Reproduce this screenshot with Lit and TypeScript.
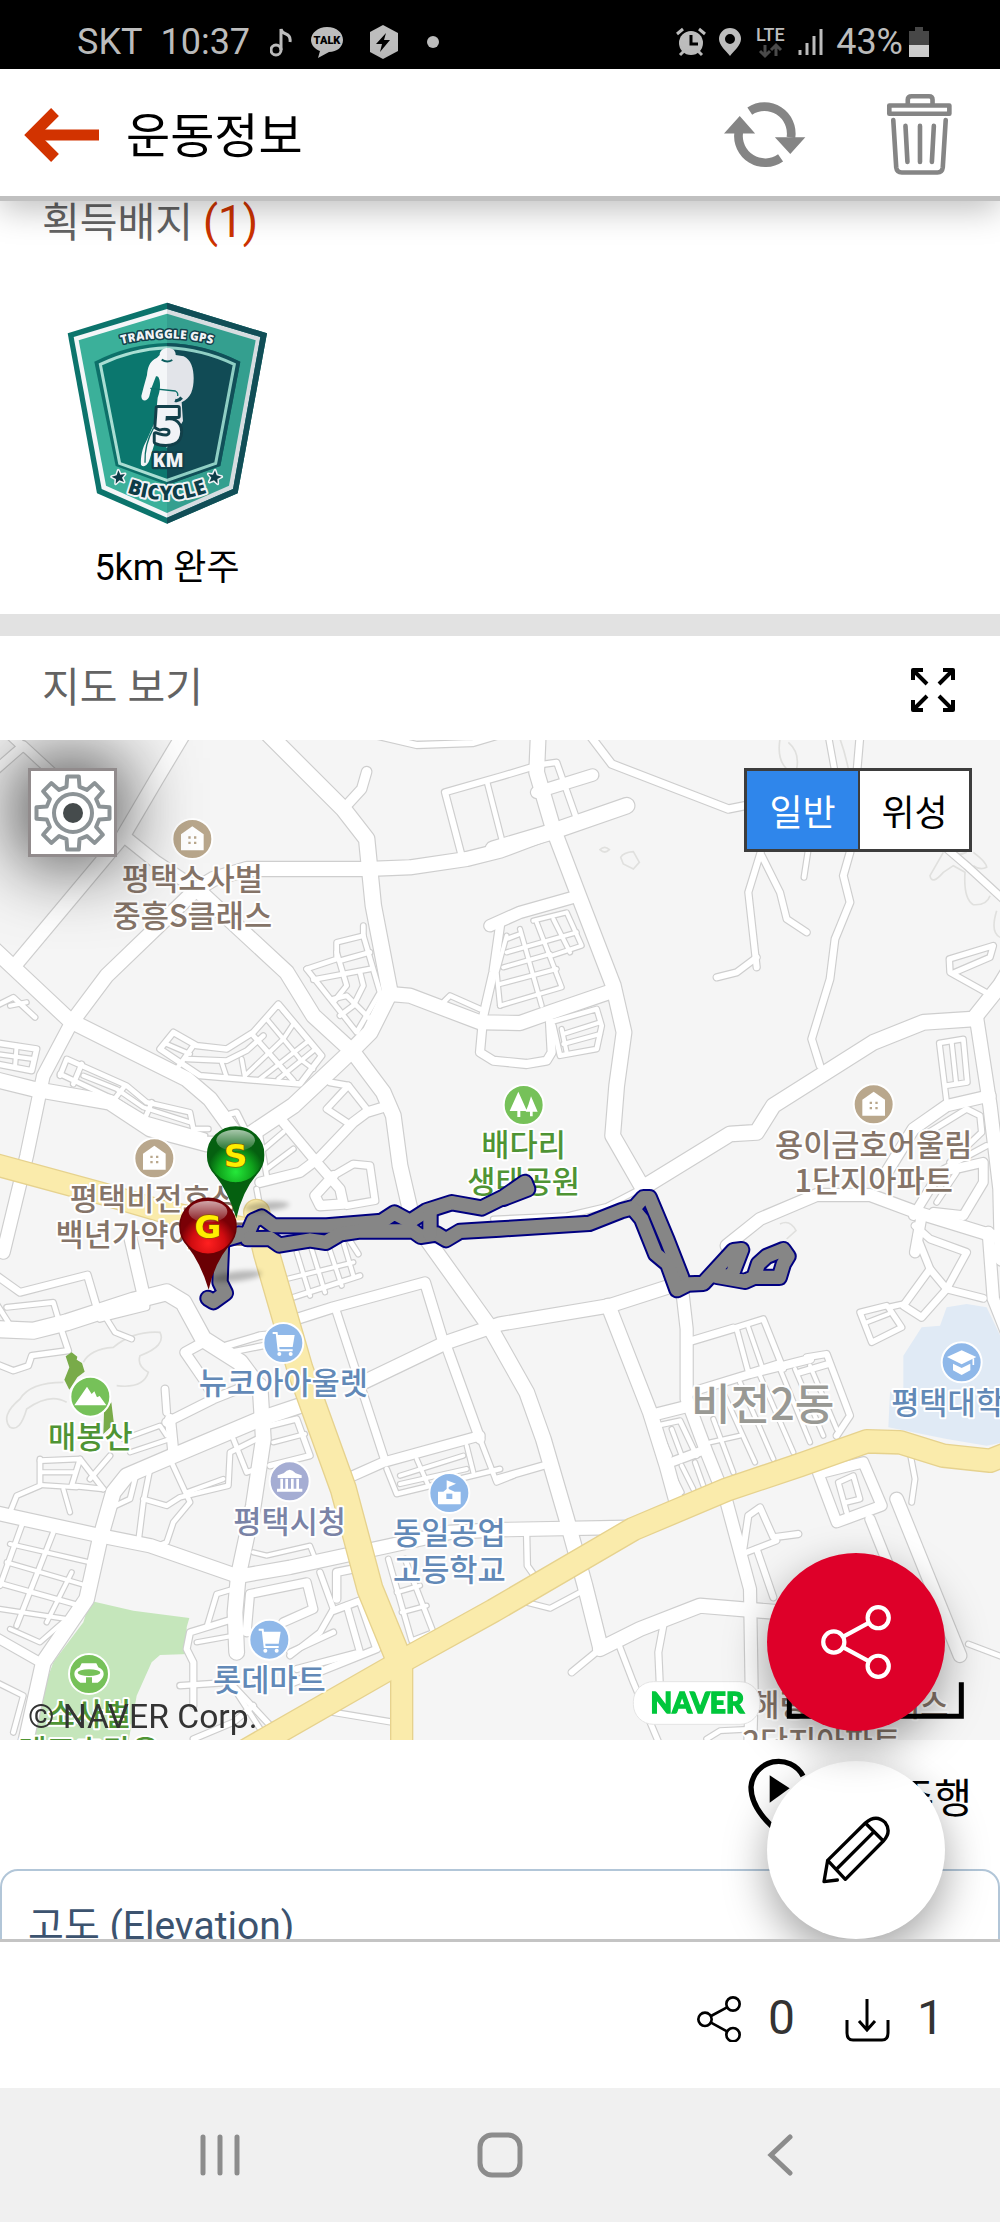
import { LitElement, html, svg, css } from "lit";
import { customElement, state } from "lit/decorators.js";

type Road = [width: number, points: string];
interface Tile {
  dx: number;
  dy: number;
  roads: Road[];
}

// Street network. Each tile covers 1500 x 1500 map units; a road is its width and its points.
const TILES: Tile[] = [
  {
    dx: 0,
    dy: 0,
    roads: [
      [14, "920,690 1010,660 1010,610 1090,590 1090,560"],
      [14, "1090,590 1140,760 1070,880 920,690"],
      [14, "1010,640 1040,740 1000,790"],
      [14, "940,722 1110,690"],
      [14, "1020,665 1110,640"],
      [14, "1080,700 1090,740 1060,800 1020,830"],
      [14, "1000,780 1040,770 1060,790 1110,840"],
      [16, "480,930 520,880 590,920 680,930 760,880 835,795 965,950 900,1035 600,1010 480,930"],
      [14, "530,990 580,920"],
      [14, "560,960 680,965 740,935 790,890"],
      [12, "500,915 570,945"],
      [14, "760,890 880,1025"],
      [12, "665,970 680,1015"],
      [12, "725,960 735,1015"],
      [12, "735,1010 850,900 880,855"],
      [12, "780,1020 920,910"],
      [12, "835,1020 940,935"],
      [12, "800,840 900,960 940,990"],
      [12, "850,815 940,920"],
      [14, "180,1010 200,960 380,1040 440,1090 570,1120 580,1170 625,1170"],
      [14, "180,1005 340,1080 440,1140 615,1190"],
      [14, "245,975 220,1035"],
      [14, "375,1040 340,1085"],
      [14, "455,1090 430,1150"],
      [12, "250,1010 350,1050 430,1105 570,1150"],
      [16, "-10,912 110,930 95,995 -10,975"],
      [12, "50,920 45,985"],
      [12, "-10,945 100,960"],
      [14, "-10,800 40,775 105,835"],
      [12, "30,800 80,790"],
      [18, "1385,350 1335,160 1510,110 1610,80"],
      [14, "1460,125 1510,320"],
      [18, "1130,-10 1250,18 1420,12 1510,-15"],
      [14, "1330,790 1350,770 1440,810"],
      [24, "1500,560 1480,700 1450,830 1440,940 1480,965 1580,975 1640,965 1655,940 1650,850"],
      [18, "990,1030 1045,1040 1100,1110"],
      [18, "1045,1040 980,1110 1040,1150"],
      [14, "780,1240 850,1180"],
      [14, "800,1290 880,1230"],
      [14, "780,1190 800,1310"],
      [14, "770,1350 785,1430"],
      [16, "690,1125 710,1120 740,1180"],
      [20, "1000,1310 1060,1275 1110,1280 1125,1385 1040,1400"],
      [28, "850,1150 950,1270 1020,1350 1030,1395 960,1400 945,1370 1000,1310"],
      [28, "780,1330 900,1300 960,1255 1060,1150 1100,1120 1165,1100"],
      [28, "1030,210 1085,150 1100,98"],
      [26, "-10,90 70,20 200,140"],
      [26, "0,-40 70,25"],
      [36, "370,290 470,370 590,450"],
      [40, "560,-30 470,120 370,290 40,685"],
      [44, "-40,610 40,685 210,845 400,940 560,1020 630,1080 710,1190"],
      [42, "215,850 320,710 590,450 640,420 740,390 1100,390 1230,385 1400,360 1500,335 1660,275"],
      [44, "590,450 860,700 940,830 1060,940 1150,1060 1180,1130 1200,1280 1230,1410"],
      [46, "790,-30 1030,210 1100,300 1120,500 1170,760 1110,880 1050,940 880,1100 760,1180 690,1220"],
      [42, "1170,765 1230,770 1440,850 1560,852 1650,820 1840,755"],
      [44, "-20,1020 100,1050 330,1090 450,1170 620,1215 700,1215"],
      [38, "215,850 130,1010 80,1250 10,1540"],
    ],
  },
  {
    dx: 1500,
    dy: 0,
    roads: [
      [12, "100,545 200,520 245,620 155,650"],
      [12, "20,590 -10,700 0,800"],
      [12, "60,570 125,800"],
      [12, "110,550 185,745 0,800"],
      [12, "160,540 210,640"],
      [12, "20,600 60,585"],
      [12, "20,640 230,580"],
      [12, "10,685 150,645"],
      [12, "0,735 170,690"],
      [14, "150,850 290,810 305,860 290,930 180,950 160,860"],
      [12, "190,885 300,850"],
      [12, "190,915 300,885"],
      [12, "185,870 200,940"],
      [16, "100,80 170,70 230,240"],
      [16, "985,-10 1005,100"],
      [18, "785,330 745,460 770,685"],
      [18, "770,655 710,700 650,715"],
      [18, "785,350 840,460 860,540 920,580"],
      [14, "925,330 912,415"],
      [20, "960,980 935,900 990,720 1005,600 1050,490 1030,410 1050,340 1080,-10"],
      [20, "1330,320 1400,380 1520,490"],
      [16, "1475,770 1350,700 1348,660 1480,620 1470,655 1365,700"],
      [14, "1340,1090 1318,912 1390,900 1402,1030 1340,1040"],
      [12, "1355,910 1368,1030"],
      [16, "1270,1190 1400,1110 1440,1130 1445,1180 1350,1270"],
      [16, "1330,1290 1460,1220"],
      [14, "1310,1390 1370,1300"],
      [26, "1240,1430 1320,1300 1450,1270 1450,1330 1390,1430 1300,1420"],
      [34, "1470,1070 1340,1100 1240,1170 1160,1300"],
      [36, "680,1520 780,1440 950,1368 1110,1368 1250,1420 1510,1500"],
      [30, "1265,1430 1245,1540"],
      [14, "-20,1440 200,1430 320,1402 430,1345"],
      [22, "255,-30 335,75 685,210 760,195"],
      [34, "110,160 278,108"],
      [46, "-20,330 150,280 380,200"],
      [34, "-30,560 60,520 230,472"],
      [44, "115,-20 110,100 160,270 240,480 340,740 372,880 350,1040 338,1190 430,1350"],
      [44, "430,1345 690,1185 770,1180 820,1100 1120,910 1270,850 1420,840 1500,740 1560,640"],
      [40, "1430,840 1470,1100 1500,1350 1505,1560"],
    ],
  },
  {
    dx: 0,
    dy: 1500,
    roads: [
      [14, "120,660 120,740 50,770 30,820"],
      [14, "120,665 240,660 215,740 310,750"],
      [12, "125,700 225,700"],
      [12, "120,738 230,745"],
      [14, "240,660 310,750"],
      [12, "190,750 210,820"],
      [14, "330,650 270,720"],
      [14, "65,860 0,1040"],
      [14, "160,880 50,1160"],
      [12, "30,915 270,970"],
      [12, "20,970 260,1040"],
      [14, "-10,1030 240,1100"],
      [12, "0,1110 200,1140 120,1210 30,1170"],
      [12, "215,1000 140,1150"],
      [14, "-10,1330 70,1370 40,1480"],
      [14, "410,700 390,780 325,810"],
      [14, "450,690 430,790 415,910"],
      [14, "430,780 500,800 540,775 685,740 690,640 770,600"],
      [14, "510,660 570,790 520,850 500,910 475,920"],
      [12, "560,760 670,720"],
      [14, "700,600 740,700 770,690"],
      [16, "810,560 890,540 930,650 810,680"],
      [12, "820,610 915,585"],
      [12, "370,600 480,560 500,590"],
      [12, "390,640 510,600"],
      [24, "740,1180 750,1065 920,1030 940,1110 850,1150"],
      [16, "960,1000 1000,1110 960,1180 870,1250"],
      [22, "1010,1080 1010,1000 1060,990"],
      [20, "1000,1115 1080,1085 1130,1230 880,1330"],
      [18, "1040,1100 1080,1240 890,1290"],
      [16, "1000,1180 870,1240"],
      [18, "700,1140 570,1180 560,1230 580,1270 580,1400"],
      [14, "620,1165 650,1065 700,1050"],
      [12, "590,1210 700,1190"],
      [16, "540,1340 690,1330 830,1480"],
      [14, "690,1330 800,1500"],
      [14, "1165,960 1235,1205 1300,1180 1215,960"],
      [12, "1190,1060 1260,1040"],
      [12, "1205,1120 1280,1100"],
      [16, "580,1500 700,1450 760,1400"],
      [16, "1000,1420 1180,1450"],
      [12, "760,940 800,950 930,920 950,970"],
      [12, "890,40 930,170"],
      [12, "935,30 975,160"],
      [12, "985,20 1025,140"],
      [12, "1030,10 1060,110"],
      [12, "860,120 1060,70"],
      [14, "880,175 1080,110"],
      [14, "1040,-10 1075,45"],
      [14, "1160,690 1190,765 1500,690"],
      [12, "1200,710 1390,650"],
      [12, "1200,735 1400,690"],
      [12, "1250,660 1285,740"],
      [12, "1400,620 1420,700"],
      [14, "1440,600 1490,730 1540,710"],
      [16, "300,240 440,205 440,170"],
      [14, "320,240 345,280 395,300"],
      [16, "180,260 205,335 95,350 85,380 40,395 -10,375"],
      [14, "-10,195 25,250"],
      [14, "20,205 160,190 175,240"],
      [20, "-10,110 60,160 262,108 295,220"],
      [28, "610,310 555,340 610,420 640,470"],
      [20, "680,320 780,290 880,280"],
      [16, "690,340 790,320"],
      [20, "495,450 500,520"],
      [26, "500,550 640,480 740,440"],
      [30, "510,540 520,640"],
      [30, "890,240 1000,205 1275,130 1330,310"],
      [22, "1010,220 1155,665"],
      [28, "1060,710 1150,670 1440,590"],
      [28, "1335,310 1440,600"],
      [40, "1090,430 1340,310 1500,255 1830,200 2000,145"],
      [44, "1280,0 1470,265 1580,460 1630,600 1700,840 1755,1040 1800,1220"],
      [36, "385,-30 430,165"],
      [48, "-20,270 100,275 200,250 400,185 500,160 550,190 610,300 720,370 780,450"],
      [44, "780,440 790,600 760,800 715,1010 705,1120 710,1240"],
      [44, "900,500 780,540 520,650 380,710 340,760 300,900 260,1080 130,1270 70,1540"],
      [40, "-20,820 300,890 450,920 715,1012 870,985 1170,920 1350,880 1500,872 1880,865"],
      [26, "-20,1190 120,1270"],
    ],
  },
  {
    dx: 1500,
    dy: 1500,
    roads: [
      [12, "840,390 930,610"],
      [12, "885,390 970,590"],
      [12, "930,380 1010,570"],
      [12, "780,410 880,640"],
      [12, "720,430 820,660"],
      [12, "665,450 765,670"],
      [12, "640,540 700,700"],
      [12, "630,610 720,590"],
      [14, "470,560 540,545 590,650"],
      [12, "480,580 510,650"],
      [12, "515,570 545,650"],
      [12, "510,690 545,760"],
      [12, "545,680 580,750"],
      [12, "585,670 610,740"],
      [26, "500,675 620,630"],
      [22, "560,310 700,268"],
      [16, "700,268 790,240 850,390"],
      [14, "710,270 745,400 840,370"],
      [12, "745,265 785,380"],
      [24, "570,460 750,405 930,360"],
      [18, "900,400 985,375"],
      [18, "920,355 980,345 1050,530 1010,590"],
      [30, "950,690 1010,850 1145,800 1090,670 970,700"],
      [14, "1040,820 1015,730 1060,710 1080,780 1040,790"],
      [28, "1110,840 1170,990"],
      [38, "1190,780 1380,1250"],
      [14, "1230,640 1245,720 1235,790"],
      [18, "730,930 745,830 780,805 820,895 895,885"],
      [16, "740,940 830,905"],
      [18, "770,930 820,1075"],
      [18, "300,1230 215,1300"],
      [16, "350,1200 400,1330 480,1520"],
      [18, "490,1160 475,1240 480,1350"],
      [14, "1405,1215 1510,1255"],
      [16, "80,890 82,980 110,1020"],
      [14, "60,1085 150,1108 250,1055"],
      [20, "-10,720 130,680"],
      [14, "620,1500 660,1475 760,1470"],
      [20, "1340,150 1400,40 1290,0 1245,-40"],
      [20, "1250,-10 1290,90 1340,150 1450,178"],
      [20, "1290,90 1210,200 1265,235 1345,145"],
      [16, "1160,200 1080,220 1115,310 1205,265 1165,205 1210,195"],
      [12, "1100,250 1165,225"],
      [34, "450,530 570,500"],
      [42, "325,200 450,520 500,680 530,790"],
      [36, "545,140 560,270 560,480 620,640 680,790 750,1050 755,1350 750,1560"],
      [42, "300,1230 420,1170 600,1100 840,1120"],
      [34, "1465,-20 1480,180 1540,330"],
    ],
  },
];

const HIGHWAYS: Road[] = [
  [62, "-20,1275 300,1362 480,1415 790,1480"],
  [74, "770,1420 800,1545 900,1890 1030,2250 1110,2550 1200,2770"],
  [62, "1205,2770 1205,3100"],
  [66, "720,3045 1200,2770 1480,2615 1900,2370 2180,2252 2400,2178 2600,2107 2700,2110 2830,2150 2970,2165 3060,2130"],
];

const TRACKS = [
  "715,1485 742,1487 760,1445 785,1434 820,1460 980,1461 1145,1447 1183,1422 1230,1447 1280,1415 1355,1391 1445,1407 1510,1375 1575,1330 1583,1350 1510,1378",
  "742,1499 810,1498 838,1518 930,1503 978,1510 1020,1485 1080,1476 1240,1476 1262,1492 1310,1485 1338,1502 1380,1477 1500,1470 1768,1453 1865,1415 1905,1404 1930,1376 1948,1376 2002,1505 2045,1615 2050,1640",
  "1290,1420 1290,1485",
  "715,1490 665,1505 660,1630 676,1662 640,1688 624,1678",
  "1900,1410 1925,1440 1967,1545 2003,1575 2031,1652 2065,1635 2110,1633 2200,1535 2225,1532 2195,1610 2150,1612 2235,1627 2262,1615 2275,1575 2300,1552 2350,1532 2364,1552 2350,1575 2338,1615 2262,1615",
];

interface Place {
  x: number;
  y: number;
  icon: string;
  tone: string;
  lines: string[];
}

const PLACES: Place[] = [
  { x: 577, y: 300, icon: "house", tone: "brown", lines: ["평택소사벌", "중흥S클래스"] },
  { x: 463, y: 1258, icon: "house", tone: "brown", lines: ["평택비전효성", "백년가약아파트"] },
  { x: 2621, y: 1096, icon: "house", tone: "brown", lines: ["용이금호어울림", "1단지아파트"] },
  { x: 1571, y: 1098, icon: "trees", tone: "green", lines: ["배다리", "생태공원"] },
  { x: 850, y: 1812, icon: "cart", tone: "blue", lines: ["뉴코아아울렛"] },
  { x: 271, y: 1973, icon: "peak", tone: "green", lines: ["매봉산"] },
  { x: 869, y: 2227, icon: "hall", tone: "violet", lines: ["평택시청"] },
  { x: 1348, y: 2262, icon: "school", tone: "blue", lines: ["동일공업", "고등학교"] },
  { x: 808, y: 2702, icon: "cart", tone: "blue", lines: ["롯데마트"] },
  { x: 2885, y: 1870, icon: "cap", tone: "blue", lines: ["평택대학교"] },
  { x: 267, y: 2805, icon: "arena", tone: "green", lines: ["소사벌", "레포츠타운"] },
];

const GLYPHS: Record<string, unknown> = {
  house: svg`<path class="w" d="M0-38 34-14V34H-34V-14Z"/><path class="c" d="M-12-8h7v7h-7zM5-8h7v7H5zM-12 8h7v7h-7zM5 8h7v7H5z"/>`,
  trees: svg`<path class="w" d="M-16-40 10 18H-10V36H-19V18H-42ZM22-26 42 20H27V34H19V20H6L14 0Z"/>`,
  cart: svg`<path d="M-32-30H-20L-14 22H28" fill="none" stroke="#fff" stroke-width="6"/><path class="w" d="M-20-24H34L28 12H-15Z"/><circle class="w" cx="-12" cy="33" r="6"/><circle class="w" cx="22" cy="33" r="6"/>`,
  peak: svg`<path class="w" d="M-48 26-10-30 4-8 12-16 20 2 28-2 48 26Z"/>`,
  hall: svg`<path class="w" d="M-36-10V-18L-18-24Q0-46 18-24L36-18V-10ZM-28-8h8V22h-8zM-13-8h8V22h-8zM4-8h8V22H4zM20-8h8V22h-8zM-38 22H38V31H-38z"/>`,
  school: svg`<path class="w" d="M-8-38 20-28-2-18V-12L16-4H34V34H-34V-4H-18L-8-12Z"/><path class="c" d="M-9 2H9V18H-9z"/>`,
  cap: svg`<path class="w" d="M0-36 44-16 0 6-44-16ZM-26 4 0 17 26 4V24L0 38-26 24Z"/><path d="M35-12V8" stroke="#fff" stroke-width="5"/>`,
  arena: svg`<path class="w" d="M-22-32H22L28-20Q44-14 44 0 44 14 26 26H9V10H-9V26H-26Q-44 14-44 0-44-14-28-20Z"/><ellipse class="c" cx="0" cy="-4" rx="34" ry="10"/>`,
};

const SHARE = svg`<g fill="none" stroke="currentColor"><circle cx="12" cy="35" r="10"/><circle cx="54" cy="12" r="10"/><circle cx="54" cy="58" r="10"/><path d="M21 30 45 17M21 40 45 53"/></g>`;

@customElement("course-map")
class CourseMap extends LitElement {
  static styles = css`
    :host {
      display: block;
    }
    svg {
      display: block;
      width: 100%;
      height: auto;
      background: #f5f5f5;
      font-family: "Noto Sans CJK KR", sans-serif;
    }
    .line {
      fill: none;
      stroke-linejoin: round;
      stroke-linecap: round;
    }
    .edge {
      stroke: #cecece;
    }
    .road {
      stroke: #fff;
    }
    .hw-edge {
      stroke: #e6d28e;
    }
    .hw {
      stroke: #faebab;
    }
    .contour {
      fill: none;
      stroke: #e0e0de;
      stroke-width: 5;
    }
    .track-edge {
      stroke: #000080;
      stroke-width: 52;
    }
    .track {
      stroke: #868686;
      stroke-width: 40;
    }
    .label {
      font-size: 92px;
      font-weight: 500;
      text-anchor: middle;
      paint-order: stroke;
      stroke: #fff;
      stroke-width: 12;
      stroke-linejoin: round;
      fill: var(--ink);
    }
    .brown {
      --tone: #b9a78c;
      --ink: #857468;
    }
    .green {
      --tone: #76c159;
      --ink: #4f9434;
    }
    .blue {
      --tone: #8fb8e9;
      --ink: #6289b7;
    }
    .violet {
      --tone: #a5add3;
      --ink: #7a83a6;
    }
    .dong {
      --ink: #999994;
      font-size: 129px;
    }
    .disc {
      fill: var(--tone);
      stroke: #fff;
      stroke-width: 6;
    }
    .w {
      fill: #fff;
    }
    .c {
      fill: var(--tone);
    }
    .pin-letter {
      font: 900 98px "DejaVu Sans", sans-serif;
      text-anchor: middle;
      fill: #ffee00;
      paint-order: stroke;
      stroke: #8a5a00;
      stroke-width: 4;
    }
    .copyright {
      font: 101px Roboto, sans-serif;
      fill: #333;
    }
    .brand {
      font: 900 84px Lato, sans-serif;
      text-anchor: middle;
      fill: #00c73c;
      stroke: #00c73c;
      stroke-width: 4;
    }
  `;

  private network(kind: "edge" | "road") {
    const extra = kind === "edge" ? 7 : 0;
    return TILES.map(
      (t) => svg`<g transform="translate(${t.dx} ${t.dy})">${t.roads.map(
        ([w, p]) => svg`<polyline class="line ${kind}" stroke-width=${w + extra} points=${p}/>`,
      )}</g>`,
    );
  }

  private place(p: Place) {
    return svg`<g class=${p.tone} transform="translate(${p.x} ${p.y})">
      <circle class="disc" r="60"/>${GLYPHS[p.icon]}
      ${p.lines.map((line, i) => svg`<text class="label" y=${154 + i * 110}>${line}</text>`)}
    </g>`;
  }

  private pin(x: number, y: number, fill: string, stem: string, letter: string) {
    return svg`<g transform="translate(${x} ${y})">
      <path d="M-62 60Q-22 110 2 190 20 110 62 60Z" fill=${stem}/>
      <circle r="84" fill="url(#${fill})" stroke=${stem} stroke-width="5"/>
      <ellipse cx="0" cy="-44" rx="58" ry="32" fill="url(#gloss)"/>
      <text class="pin-letter" y="36">${letter}</text>
    </g>`;
  }

  render() {
    return html`<svg viewBox="0 3 3000 3000" role="img" aria-label="지도">
      <defs>
        <radialGradient id="go" cy="0.8"><stop offset="0" stop-color="#25e83a"/><stop offset="0.6" stop-color="#10a51c"/><stop offset="1" stop-color="#056010"/></radialGradient>
        <radialGradient id="end" cy="0.8"><stop offset="0" stop-color="#ff2020"/><stop offset="0.6" stop-color="#d00c10"/><stop offset="1" stop-color="#7a0006"/></radialGradient>
        <linearGradient id="gloss" x2="0" y2="1"><stop offset="0" stop-color="#fff" stop-opacity="0.65"/><stop offset="1" stop-color="#fff" stop-opacity="0.1"/></linearGradient>
        <filter id="soft" x="-30%" y="-100%" width="160%" height="300%"><feGaussianBlur stdDeviation="8"/></filter>
      </defs>
      <path fill="#c5e6bb" d="M270 2585 400 2615 568 2637 560 2665V2710L568 2745 480 2748 455 2770 410 2870 385 3010H85L120 2880 160 2770 250 2650Z"/>
      <path fill="#e0eaf5" d="M2840 1705 2900 1695 2960 1705 3010 1810V2110L2960 2120 2840 2100 2665 2065 2670 1960 2710 1950V1850L2765 1765 2820 1760Z"/>
      <path class="contour" d="M250 1870Q270 1830 340 1825 400 1775 480 1780 500 1820 420 1850 410 1880 445 1900 430 1950 350 1940M190 1930Q90 1930 60 1980 0 2030 30 2065 60 2080 80 2010 150 1960 200 1990M2340 0Q2330 60 2360 90M2365 10Q2400 40 2390 90M2520 0Q2535 40 2545 90M2830 340 2790 410Q2795 440 2830 400L2860 380 2895 400Q2890 480 2920 497 2960 500 2970 470M2920 340Q2960 370 2960 385 2940 395 2920 380M2865 350 2880 348 2900 340ZM1862 355Q1870 340 1900 338L1918 370 1900 390 1870 375ZM1800 332Q1814 318 1828 332 1814 346 1800 332ZM2340 1455Q2370 1440 2388 1475L2360 1500M2990 515Q2970 580 3000 595"/>
      ${this.network("edge")}
      ${this.network("road")}
      ${HIGHWAYS.map(([w, p]) => svg`<polyline class="line hw-edge" stroke-width=${w + 8} points=${p}/>`)}
      ${HIGHWAYS.map(([w, p]) => svg`<polyline class="line hw" stroke-width=${w} points=${p}/>`)}
      <path fill="#79ab49" d="M197 1852 215 1840 232 1853 230 1862 246 1872 254 1898 232 1915 208 1952 193 1922 208 1885ZM334 1990 342 2055 310 2085 312 2020Z"/>
      <text class="label dong" x="2288" y="2042">비전2동</text>
      ${PLACES.map((p) => this.place(p))}
      <g class="brown">
        <text class="label" x="2465" y="2932">비전해링턴플레이스</text>
        <text class="label" x="2465" y="3042">2단지아파트</text>
      </g>
      ${TRACKS.map((p) => svg`<polyline class="line track-edge" points=${p}/>`)}
      ${TRACKS.map((p) => svg`<polyline class="line track" points=${p}/>`)}
      <g fill="#000" opacity="0.25" filter="url(#soft)">
        <ellipse cx="800" cy="1402" rx="68" ry="13" transform="rotate(-5 800 1402)"/>
        <ellipse cx="710" cy="1612" rx="75" ry="15" transform="rotate(-7 710 1612)"/>
      </g>
      ${this.pin(707, 1248, "go", "#056010", "S")}
      ${this.pin(624, 1462, "end", "#6a0004", "G")}
      <path d="M2368 2870V2972H2884V2870" transform="translate(0 -40)" fill="none" stroke="#000" stroke-width="15"/>
      <rect x="1900" y="2828" width="380" height="128" rx="60" fill="#fff" stroke="#e4e4e4" stroke-width="3"/>
      <text class="brand" x="2092" y="2921">NAVER</text>
      <text class="copyright" x="84" y="2966">© NAVER Corp.</text>
    </svg>`;
  }
}

@customElement("distance-badge")
class DistanceBadge extends LitElement {
  static styles = css`
    :host {
      display: block;
    }
    svg {
      display: block;
      width: 100%;
      height: auto;
      font-family: "Open Sans", sans-serif;
      font-weight: 800;
    }
    text {
      text-anchor: middle;
      paint-order: stroke;
      stroke-linejoin: round;
    }
    .light {
      fill: #f1f3f6;
      stroke: #12404a;
    }
    .ink {
      fill: #0d3d47;
      stroke: #f1f3f6;
    }
  `;
  render() {
    return html`<svg viewBox="80 60 600 681" role="img" aria-label="TRANGGLE GPS 5KM BICYCLE">
      <defs>
        <clipPath id="right"><path d="M380 0h400v800H380z"/></clipPath>
        <path id="arc-top" d="M200 202Q380 142 560 202"/>
        <path id="arc-low" d="M230 622Q380 692 530 622"/>
      </defs>
      <path fill="#0c746c" d="M380 65 680 157 592 637 380 728 170 637 82 157Z"/>
      <path fill="#f4f6f8" d="M380 84 660 168 578 624 380 710 184 624 100 168Z"/>
      <path fill="#3bb09a" d="M380 98 646 178 566 614 380 696 197 614 115 178Z"/>
      <path fill="#0d7069" d="M162 242Q270 188 380 186 490 188 600 242L540 555 380 612 226 555Z"/>
      <path fill="#0b776e" stroke="#a9ded3" stroke-width="9" d="M180 250Q275 204 380 200 487 204 582 250L526 547 380 598 238 547Z"/>
      <path fill="#f4f6f8" d="M350 230C326 240 322 262 320 282L310 318 303 345C303 364 322 362 327 346L332 325 347 286C360 280 364 322 352 350L345 420 318 480C306 500 300 530 302 552 312 562 324 550 328 535L345 480 380 500 428 420 424 364C452 352 460 325 460 292 460 262 452 236 430 226L406 222C408 194 358 194 358 222Z"/>
      <g clip-path="url(#right)">
        <path fill="#06283f" opacity="0.12" d="M380 84 660 168 578 624 380 710Z"/>
        <path fill="#114e57" fill-rule="evenodd" d="M380 65 680 157 592 637 380 728V710L578 624 660 168 380 84Z"/>
        <path fill="#115059" d="M380 186Q490 188 600 242L540 555 380 612Z"/>
        <path fill="#114b55" stroke="#8fcfc4" stroke-width="9" d="M180 250Q275 204 380 200 487 204 582 250L526 547 380 598 238 547Z"/>
        <path fill="#e2e4e9" d="M358 222C358 194 408 194 406 222L430 226C452 236 460 262 460 292 460 325 452 352 424 364L428 420 380 500 345 480Z"/>
      </g>
      <path d="M330 322 405 330Q414 334 412 345" fill="none" stroke="#0d6f6a" stroke-width="4"/>
      <path d="M364 236Q380 246 396 237" fill="none" stroke="#0d5f60" stroke-width="6"/>
      <path d="M404 358Q414 362 424 350" fill="none" stroke="#114b55" stroke-width="10"/>
      <path d="M340 440Q312 490 314 545" fill="none" stroke="#0d7069" stroke-width="4"/>
      <text class="light" font-size="36" stroke-width="9"><textPath href="#arc-top" startOffset="50%">TRANGGLE GPS</textPath></text>
      <text class="light" x="383" y="490" font-size="148" stroke-width="18">5</text>
      <text class="light" x="383" y="558" font-size="56" stroke-width="14">KM</text>
      <text class="ink" font-size="60" stroke-width="12"><textPath href="#arc-low" startOffset="50%">BICYCLE</textPath></text>
      <g class="ink" stroke-width="9" paint-order="stroke" stroke-linejoin="round">
        <path d="M234 568 240 581 254 579 245 590 251 603 237 598 226 608 227 594 214 587 229 583Z"/>
        <path d="M524 568 518 581 504 579 513 590 507 603 521 598 532 608 531 594 544 587 529 583Z"/>
      </g>
    </svg>`;
  }
}

@customElement("app-root")
class AppRoot extends LitElement {
  @state() private mapType = "일반";

  static styles = css`
    :host {
      display: flex;
      flex-direction: column;
      height: 100vh;
      overflow: hidden;
      background: #fff;
      color: #000;
      font-family: Roboto, "Noto Sans CJK KR", sans-serif;
    }
    * {
      box-sizing: border-box;
    }
    h1,
    h2,
    h3,
    p {
      margin: 0;
      font-weight: 400;
    }
    button {
      display: flex;
      align-items: center;
      justify-content: center;
      padding: 0;
      border: 0;
      background: none;
      color: inherit;
      font: inherit;
      cursor: pointer;
    }
    svg {
      display: block;
      flex: none;
    }
    .status {
      display: flex;
      align-items: center;
      justify-content: space-between;
      height: 69px;
      padding: 15px 71px 0 77px;
      background: #000;
      color: #bdbdbd;
      font-size: 36px;
      line-height: 40px;
    }
    .status div {
      display: flex;
      align-items: center;
    }
    .carrier {
      gap: 18px;
    }
    .notices {
      gap: 14px;
      padding-left: 2px;
    }
    .signals {
      gap: 12px;
    }
    .level {
      gap: 6px;
    }
    .lte {
      font: 500 18px Roboto, sans-serif;
      fill: #bdbdbd;
    }
    .talk {
      font: 900 11px Roboto, sans-serif;
      text-anchor: middle;
      fill: #000;
    }
    .header {
      position: relative;
      z-index: 1;
      display: flex;
      align-items: center;
      height: 132px;
      padding: 4px 48px 0 24px;
      border-bottom: 5px solid #c0c0c0;
      background: #fff;
      box-shadow: 0 8px 32px rgba(0, 0, 0, 0.26);
    }
    .header h1 {
      flex: 1;
      padding: 4px 0 0 26px;
      font-size: 48px;
      line-height: 56px;
    }
    .tools {
      display: flex;
      align-items: center;
      gap: 80px;
      color: #858585;
    }
    .view {
      position: relative;
      flex: 1;
      min-height: 0;
    }
    .scroll {
      height: 100%;
      overflow: hidden auto;
      scrollbar-width: none;
    }
    .badges {
      padding: 0 42px 24px;
      border-bottom: 22px solid #e2e2e2;
    }
    .title {
      color: #636363;
      font-size: 41px;
      line-height: 42px;
    }
    .count {
      color: #cc3300;
      font-size: 44px;
    }
    .badge {
      display: flex;
      flex-direction: column;
      width: 200px;
      margin: 57px 0 0 25px;
      gap: 18px;
    }
    .badge p {
      font-size: 36px;
      line-height: 44px;
      text-align: center;
    }
    .map-head {
      display: flex;
      align-items: center;
      justify-content: space-between;
      height: 104px;
      padding: 0 44px 0 42px;
    }
    .map {
      position: relative;
      overflow: hidden;
    }
    .gear {
      position: absolute;
      top: 28px;
      left: 28px;
      width: 89px;
      height: 89px;
      border: 3px solid #918b8c;
      background: #fff;
      box-shadow: -2px -2px 72px 8px rgba(0, 0, 0, 0.7);
    }
    .types {
      position: absolute;
      top: 28px;
      right: 28px;
      display: flex;
      border: 3px solid #3d3d3d;
      background: #fff;
      font-size: 36px;
    }
    .types button {
      width: 111px;
      height: 78px;
    }
    .types button + button {
      border-left: 2px solid #3d3d3d;
    }
    .types [aria-pressed="true"] {
      background: #2f86eb;
      color: #fff;
    }
    .replay {
      display: flex;
      justify-content: flex-end;
      padding: 18px 28px 30px;
    }
    .replay button {
      gap: 8px;
      font-size: 41px;
      line-height: 44px;
    }
    .chart {
      min-height: 240px;
      padding: 34px 26px;
      border: 2px solid #b2c6d8;
      border-radius: 18px;
    }
    .chart h3 {
      color: #3c536f;
      font-size: 39px;
      line-height: 42px;
    }
    .fabs {
      position: absolute;
      right: 55px;
      bottom: 0;
      display: flex;
      flex-direction: column;
      gap: 30px;
    }
    .fab {
      width: 178px;
      height: 178px;
      border-radius: 50%;
      background: #fff;
      box-shadow: 0 16px 44px rgba(0, 0, 0, 0.36);
    }
    .fab.share {
      z-index: 1;
      background: #de0029;
      color: #fff;
    }
    .counts {
      position: relative;
      display: flex;
      align-items: center;
      justify-content: flex-end;
      height: 149px;
      padding: 6px 56px 0;
      gap: 50px;
      border-top: 3px solid #c4c4c4;
      background: #fff;
      font-size: 48px;
      line-height: 56px;
      color: #333;
    }
    .counts button {
      gap: 27px;
    }
    .counts svg {
      color: #000;
    }
    .nav {
      display: grid;
      grid-template-columns: repeat(3, 1fr);
      height: 134px;
      padding: 0 80px;
      background: #f0f0f0;
      color: #8c8c8c;
    }
  `;

  private statusBar() {
    return html`<div class="status">
      <div class="carrier">
        <span>SKT</span><span>10:37</span>
        <div class="notices">
          <svg width="22" height="32" viewBox="0 0 22 32" fill="none" stroke="currentColor" stroke-width="3"><circle cx="6" cy="24" r="5"/><path d="M11 24V3Q12 7 16 8 21 10 20 16"/></svg>
          <svg width="50" height="32" viewBox="-5 0 50 32" fill="currentColor"><path d="M16 1C26 1 32 7 32 14S26 26 18 26L7 32 9 25C4 23 0 19 0 14 0 7 7 1 16 1Z"/><text class="talk" x="16" y="18">TALK</text></svg>
          <svg width="32" height="34" viewBox="3 0 32 34"><path fill="currentColor" d="M16 0 31 8V26L16 34 1 26V8Z"/><path d="M19 8 9 19H15L13 27 23 15H17Z"/></svg>
          <svg width="32" height="32" viewBox="0 0 32 32"><circle cx="17" cy="16" r="6" fill="currentColor"/></svg>
        </div>
      </div>
      <div class="signals">
        <svg width="30" height="30" viewBox="0 0 30 30" fill="none" stroke="currentColor"><circle cx="15" cy="16" r="12" fill="currentColor" stroke="none"/><path stroke-width="3" d="M1 7 7 2M29 7 23 2M4 28 8 24M26 28 22 24"/><path stroke="#000" stroke-width="3" d="M15 8V17H22"/></svg>
        <svg width="24" height="30" viewBox="0 0 24 30"><path fill="currentColor" fill-rule="evenodd" d="M12 1A11 11 0 0 1 23 12C23 18 16 24 12 29 8 24 1 18 1 12A11 11 0 0 1 12 1ZM12 7A5 5 0 1 0 12 17 5 5 0 1 0 12 7Z"/></svg>
        <svg width="32" height="34" viewBox="1 0 32 34"><text class="lte" x="3" y="16">LTE</text><path d="M12 20V31M7 26 12 31 17 26M23 31V20M18 25 23 20 28 25" fill="none" stroke="#4c4c4c" stroke-width="3"/></svg>
        <svg width="26" height="28" viewBox="0 0 26 28" stroke="currentColor" stroke-width="3"><path d="M2 27V22M9 27V15M16 27V8M23 27V1"/></svg>
        <div class="level">
          <span>43%</span>
          <svg width="20" height="30" viewBox="0 0 20 30"><path fill="#474747" d="M6 0H14V4H20V18H0V4H6Z"/><path fill="#cfcfcf" d="M0 18H20V30H0z"/></svg>
        </div>
      </div>
    </div>`;
  }

  private typeButton(name: string) {
    return html`<button aria-pressed=${this.mapType === name ? "true" : "false"} @click=${() => (this.mapType = name)}>${name}</button>`;
  }

  private gearTeeth() {
    const pts: string[] = [];
    for (let i = 0; i < 8; i++) {
      for (const [r, a] of [[27, -14], [37, -9], [37, 9], [27, 14]]) {
        const t = ((i * 45 + a) * Math.PI) / 180;
        pts.push(`${(Math.sin(t) * r).toFixed(1)},${(-Math.cos(t) * r).toFixed(1)}`);
      }
    }
    return pts.join(" ");
  }

  render() {
    return html`
      ${this.statusBar()}
      <header class="header">
        <button aria-label="뒤로">
          <svg width="76" height="54" viewBox="0 0 76 54" fill="none" stroke="#d23300"><path stroke-width="11" d="M8 27H75"/><path stroke-width="11" d="M31 4 8 27 31 50"/></svg>
        </button>
        <h1>운동정보</h1>
        <div class="tools">
          <button aria-label="새로고침">
            <svg width="82" height="67" viewBox="250 305 245 200"><g fill="none" stroke="currentColor" stroke-width="26"><path d="M327 335A80 80 0 0 1 450 414"/><path d="M294 398A80 80 0 0 0 419 475"/></g><path fill="currentColor" d="M402 413H493L448 463ZM250 402H343L297 350Z"/></svg>
          </button>
          <button aria-label="삭제">
            <svg width="66" height="83" viewBox="738 280 200 250" fill="none" stroke="currentColor" stroke-width="14" stroke-linejoin="round" stroke-linecap="round"><path d="M748 317H930V342H748ZM804 312V300Q804 289 816 289H868Q879 289 879 300V312M760 361 769 505Q771 520 786 520H894Q908 520 910 505L919 361M797 379 803 488M841 379V488M883 379 877 488"/></svg>
          </button>
        </div>
      </header>
      <main class="view">
        <div class="scroll">
          <section class="badges">
            <h2 class="title">획득배지 <span class="count">(1)</span></h2>
            <div class="badge"><distance-badge></distance-badge><p>5km 완주</p></div>
          </section>
          <section>
            <div class="map-head">
              <h2 class="title">지도 보기</h2>
              <button aria-label="전체 화면">
                <svg width="46" height="50" viewBox="0 -4 46 50" fill="none" stroke="currentColor" stroke-width="4" stroke-linejoin="round"><path d="M3 13V3H13M3 3 17 17M33 3H43V13M43 3 29 17M3 33V43H13M3 43 17 29M33 43H43V33M43 43 29 29"/></svg>
              </button>
            </div>
            <div class="map">
              <course-map></course-map>
              <button class="gear" aria-label="설정">
                <svg width="82" height="82" viewBox="-41 -41 82 82" fill="none" stroke="#8c9396" stroke-width="4" stroke-linejoin="round"><polygon points=${this.gearTeeth()}/><circle r="19"/><circle r="10" fill="#454b4c" stroke="none"/></svg>
              </button>
              <div class="types">${this.typeButton("일반")}${this.typeButton("위성")}</div>
            </div>
            <div class="replay">
              <button>
                <svg width="66" height="81" viewBox="322 688 198 243"><path d="M490 742A83 83 0 0 0 334 775Q334 830 388 884L424 920" fill="none" stroke="#000" stroke-width="16"/><path d="M390 740 450 779 390 822Z"/></svg>
                <span>모의주행</span>
              </button>
            </div>
          </section>
          <section class="chart"><h3>고도 (Elevation)</h3></section>
        </div>
        <div class="fabs">
          <button class="fab share" aria-label="공유"><svg width="70" height="74" viewBox="0 0 66 70" stroke-width="4">${SHARE}</svg></button>
          <button class="fab" aria-label="편집">
            <svg width="68" height="68" viewBox="546 855 204 204" fill="none" stroke="currentColor" stroke-width="10" stroke-linejoin="round" stroke-linecap="round"><path d="M563 988 676 876Q708 848 735 874 756 902 730 930L616 1045ZM676 876 730 930M590 1014 700 904M563 988 552 1052 592 1047"/></svg>
          </button>
        </div>
      </main>
      <footer class="counts">
        <button aria-label="공유 수"><svg width="44" height="48" viewBox="0 -2 66 70" stroke-width="4">${SHARE}</svg><span>0</span></button>
        <button aria-label="다운로드 수">
          <svg width="45" height="48" viewBox="0 -4 45 48" fill="none" stroke="currentColor" stroke-width="3"><path d="M22 1V31M14 23 22 32 30 23M2 22V35Q2 42 8 42H37Q43 42 43 35V22"/></svg><span>1</span>
        </button>
      </footer>
      <nav class="nav">
        <button aria-label="최근 앱"><svg width="42" height="42" viewBox="0 0 42 42" stroke="currentColor" stroke-width="5" stroke-linecap="round"><path d="M4 3V39M21 3V39M38 3V39"/></svg></button>
        <button aria-label="홈"><svg width="46" height="46" viewBox="0 0 46 46" fill="none" stroke="currentColor" stroke-width="5"><rect x="3" y="3" width="40" height="40" rx="12"/></svg></button>
        <button aria-label="이전"><svg width="26" height="42" viewBox="0 0 26 42" fill="none" stroke="currentColor" stroke-width="5" stroke-linecap="round"><path d="M23 3 4 21 23 39"/></svg></button>
      </nav>
    `;
  }
}
